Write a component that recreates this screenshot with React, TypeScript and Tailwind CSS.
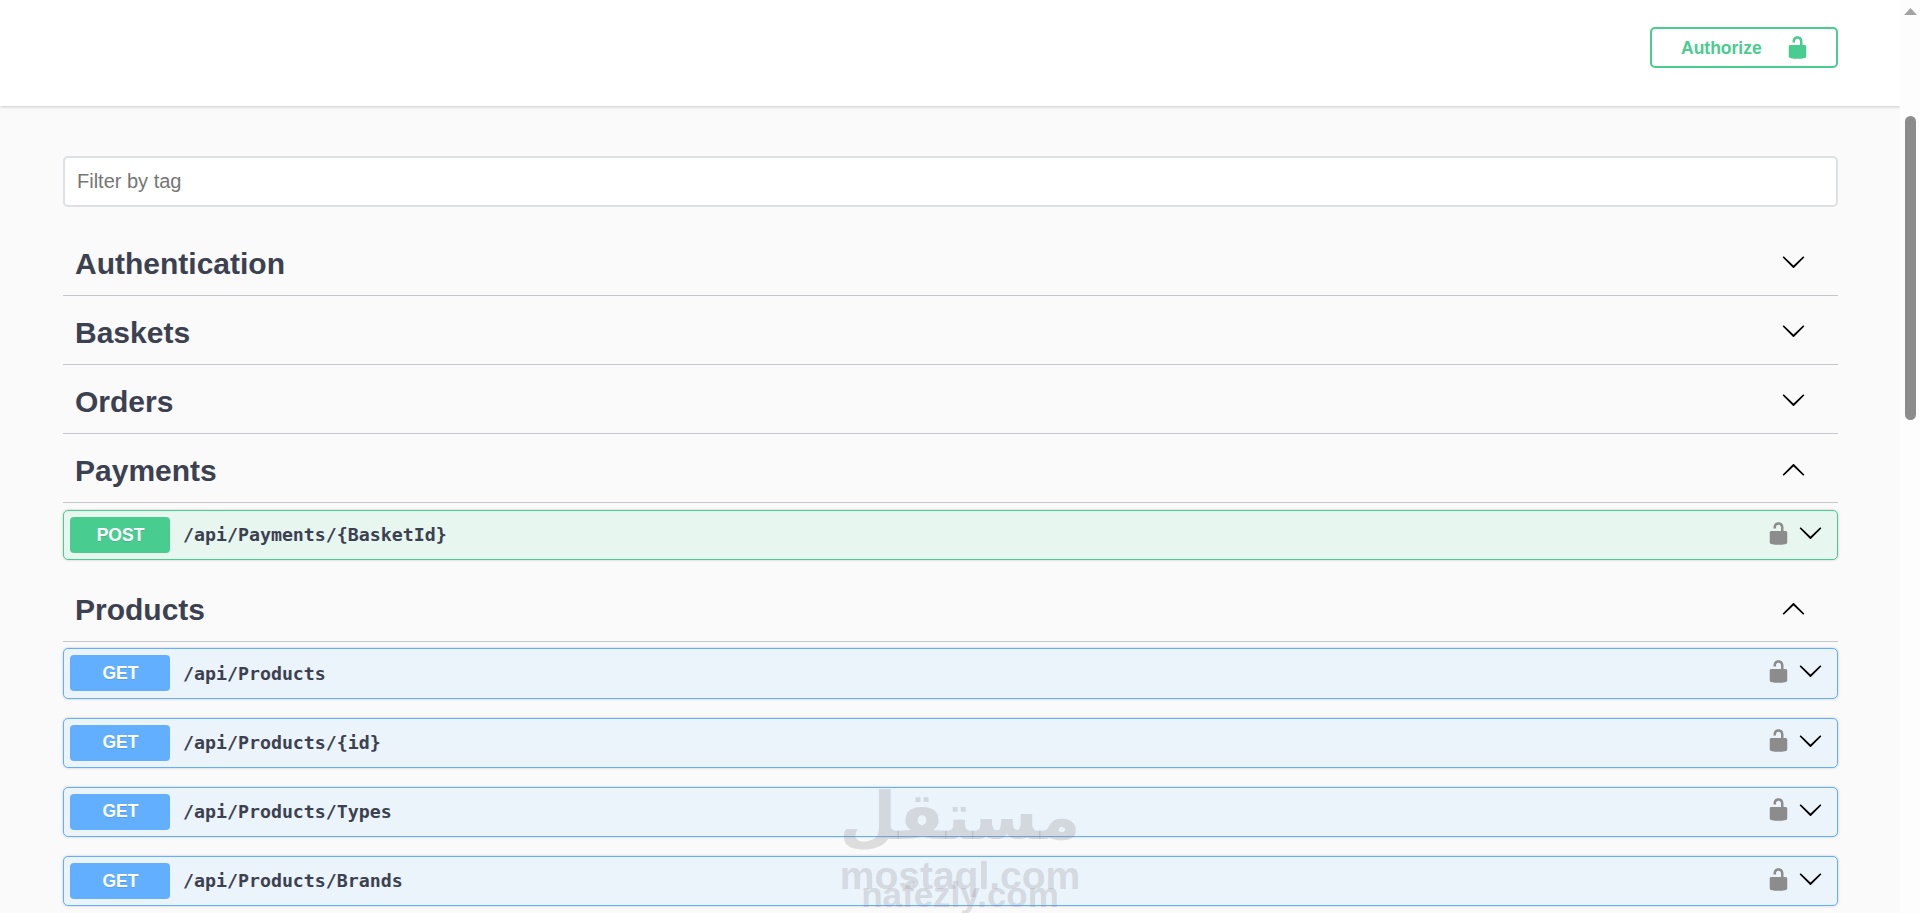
const CHEVRON = "M17.418 6.109c.272-.268.709-.268.979 0s.271.701 0 .969l-7.908 7.83c-.27.268-.707.268-.979 0l-7.908-7.83c-.27-.268-.27-.701 0-.969.271-.268.709-.268.979 0L10 13.25l7.418-7.141z";
const LOCK = "M15.8 8H14V5.6C14 2.703 12.665 1 10 1 7.334 1 6 2.703 6 5.6V6h2v-.801C8 3.754 8.797 3 10 3c1.203 0 2 .754 2 2.199V8H4c-.553 0-1 .646-1 1.199V17c0 .549.428 1.139.951 1.307l1.197.387C5.672 18.861 6.55 19 7.1 19h5.8c.549 0 1.428-.139 1.951-.307l1.196-.387c.524-.167.953-.757.953-1.306V9.199C17 8.646 16.352 8 15.8 8z";

function Chevron({ up }: { up?: boolean }) {
  return (
    <svg viewBox="0 0 20 20" className={up ? "w-[25px] h-[25px] shrink-0 rotate-180" : "w-[25px] h-[25px] shrink-0"} fill="#000">
      <path d={CHEVRON} />
    </svg>
  );
}

function Lock({ color }: { color: string }) {
  return (
    <svg viewBox="0 0 20 20" className="w-[25px] h-[25px] shrink-0" fill={color}>
      <path d={LOCK} />
    </svg>
  );
}

function Tag({ name, open, tall }: { name: string; open?: boolean; tall?: boolean }) {
  return (
    <div className={(tall ? "h-[63px]" : "h-[69px]") + " flex items-end justify-between border-b border-[#c6c7ca] pl-[12px] pr-[32px]"}>
      <span className="text-[30px] font-bold leading-[40px] pb-[11px] text-[#3b4151]">{name}</span>
      <span className={(open ? "pb-[19px]" : "pb-[21px]") + " flex"}><Chevron up={open} /></span>
    </div>
  );
}

function Op({ method, path }: { method: "GET" | "POST"; path: string }) {
  const post = method === "POST";
  return (
    <div className={(post ? "border-[#49cc90] bg-[#e8f6f0]" : "border-[#61affe] bg-[#ebf3fb]") + " h-[50.25px] flex items-center border rounded-[5px] pl-[6px] pr-[14px] shadow-[0_0_3px_rgba(0,0,0,0.19)]"}>
      <span className={(post ? "bg-[#49cc90]" : "bg-[#61affe]") + " w-[100px] h-[36px] flex items-center justify-center rounded-[4px] pl-[1px] pb-[1px] text-white text-[17.5px] font-bold [text-shadow:0_1px_0_rgba(0,0,0,0.1)]"}>{method}</span>
      <span className="ml-[13px] grow font-['DejaVu_Sans_Mono',monospace] font-bold text-[18.25px] text-[#3b4151]">{path}</span>
      <span className="flex -mt-[4px]"><Lock color="#8c8c8c" /></span>
      <span className="ml-[7px] flex -mt-[5px]"><Chevron /></span>
    </div>
  );
}

export default function App() {
  return (
    <div className="relative h-[913px] w-[1920px] flex overflow-hidden bg-[#fafafa] font-['Liberation_Sans',Arial,sans-serif]">
      <div className="w-[1900px] shrink-0 flex flex-col">
        <header className="h-[106px] shrink-0 bg-white shadow-[0_1px_3px_rgba(0,0,0,0.2)] flex items-start justify-end pt-[27px] pr-[62px]">
          <button className="w-[188px] h-[41px] flex items-center border-2 border-[#49cc90] rounded-[5px] pl-[29px] bg-white text-[#49cc90] text-[17.5px] font-bold">
            <span className="pt-[1px]">Authorize</span>
            <span className="ml-[23px] flex"><Lock color="#49cc90" /></span>
          </button>
        </header>
        <main className="flex flex-col pl-[63px] pr-[62px] pt-[50px]">
          <div className="h-[51px] flex items-center bg-white border-2 border-[#dfe0e2] rounded-[5px] pl-[12px] pb-[1px] text-[20px] text-[#757575]">Filter by tag</div>
          <div className="h-[20px]" />
          <Tag name="Authentication" />
          <Tag name="Baskets" />
          <Tag name="Orders" />
          <Tag name="Payments" open />
          <div className="h-[7px]" />
          <Op method="POST" path="/api/Payments/{BasketId}" />
          <div className="h-[19px]" />
          <Tag name="Products" open tall />
          <div className="flex flex-col gap-[19px] pt-[6px]">
            <Op method="GET" path="/api/Products" />
            <Op method="GET" path="/api/Products/{id}" />
            <Op method="GET" path="/api/Products/Types" />
            <Op method="GET" path="/api/Products/Brands" />
          </div>
        </main>
      </div>
      <div className="w-[20px] shrink-0 bg-[#fdfdfd] flex flex-col items-center">
        <svg viewBox="0 0 13 7" className="w-[13px] h-[7px] mt-[8px] ml-[1px] shrink-0" fill="#a3a3a3"><path d="M6.5 0L13 7H0z" /></svg>
        <div className="w-[11px] h-[304px] mt-[101px] ml-[1px] rounded-[6px] bg-[#8c8c8c]" />
      </div>
      <div className="absolute left-[825px] top-[782px] w-[270px] flex flex-col items-center pointer-events-none text-[rgba(130,130,130,0.24)]">
        <span dir="rtl" className="h-[70px] leading-[70px] text-[66px] font-bold font-['DejaVu_Sans',sans-serif]">مستقل</span>
        <span className="h-[40px] mt-[4px] leading-[40px] text-[39px] font-bold font-['Liberation_Sans',sans-serif]">mostaql.com</span>
        <span className="-mt-[16px] h-[30px] leading-[30px] text-[35px] font-bold font-['Liberation_Sans',sans-serif]">nafezly.com</span>
      </div>
    </div>
  );
}
